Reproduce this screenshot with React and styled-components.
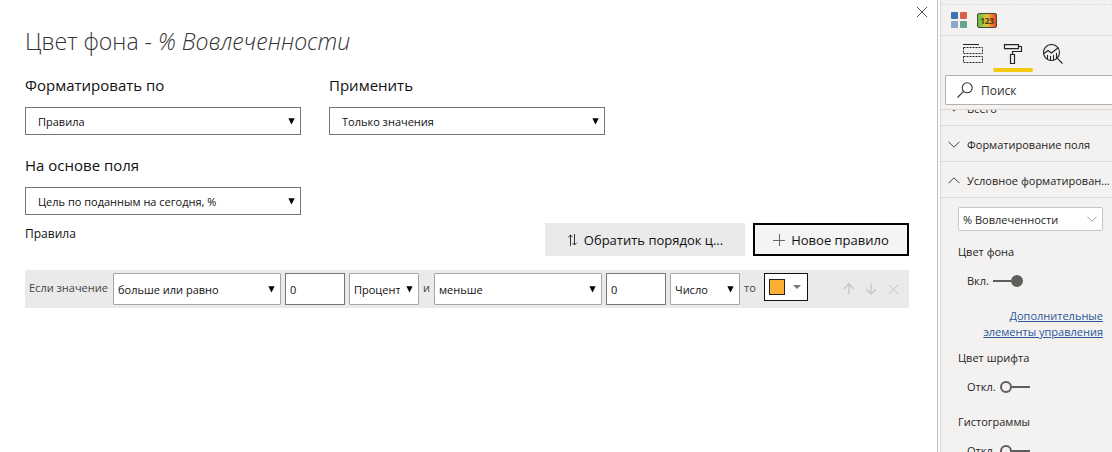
import React from "react";
import styled, { createGlobalStyle } from "styled-components";

const GlobalStyle = createGlobalStyle`
  *, *::before, *::after {
    box-sizing: border-box;
  }
  body {
    margin: 0;
    background: #fff;
    color: #111;
    font-family: "Open Sans", "Noto Sans", sans-serif;
    font-size: 12px;
  }
  button, input, select {
    margin: 0;
    font-family: inherit;
    color: inherit;
  }
`;

const Page = styled.div`
  display: flex;
  height: 100vh;
  overflow: hidden;
`;

const Dialog = styled.main`
  flex: 1;
  min-width: 0;
  padding: 4px 28px 0 25px;
`;

const CloseRow = styled.div`
  display: flex;
  justify-content: flex-end;
  height: 20px;
  margin-right: -21px;
`;

const IconButton = styled.button`
  display: flex;
  align-items: center;
  justify-content: center;
  width: ${(p) => p.$size}px;
  height: ${(p) => p.$size}px;
  padding: 0;
  border: 0;
  background: none;
  color: ${(p) => p.$color};
`;

const Title = styled.h1`
  margin: 0;
  font-size: 23px;
  font-weight: 300;
  line-height: 34px;
  color: #333;
`;

const Fields = styled.div`
  display: grid;
  grid-template-columns: 276px 276px;
  column-gap: 28px;
  row-gap: 19px;
  padding-top: 16px;
`;

const FieldLabel = styled.label`
  display: block;
  margin-bottom: 11px;
  font-size: 15px;
  line-height: 22px;
`;

const SelectBox = styled.div`
  display: grid;
  width: ${(p) => (p.$width ? p.$width + "px" : "100%")};
  height: ${(p) => p.$height}px;
  align-items: center;
  & > * {
    grid-area: 1 / 1;
  }
  & > svg {
    justify-self: end;
    margin-right: 6px;
    pointer-events: none;
  }
`;

const SelectControl = styled.select`
  appearance: none;
  width: 100%;
  height: 100%;
  padding: ${(p) => (p.$compact ? "0 18px 0 4px" : "0 20px 0 12px")};
  border: 1px solid ${(p) => (p.$compact ? "#a6a6a6" : "#767676")};
  border-radius: ${(p) => (p.$compact ? 1 : 0)}px;
  background: #fff;
  font-size: 11px;
`;

const RulesHeader = styled.div`
  display: flex;
  align-items: flex-start;
  gap: 8px;
  padding-top: 8px;
`;

const RulesTitle = styled.h2`
  flex: 1;
  margin: 0;
  font-size: 12px;
  font-weight: 400;
  line-height: 22px;
`;

const ActionButton = styled.button`
  display: flex;
  align-items: center;
  justify-content: center;
  gap: 6px;
  width: ${(p) => p.$width}px;
  height: 33px;
  padding: 0;
  border: ${(p) => (p.$focused ? "2px solid #000" : "0")};
  background: ${(p) => (p.$focused ? "#f4f4f4" : "#eaeaea")};
  font-size: 13px;
`;

const Rule = styled.div`
  display: flex;
  align-items: center;
  gap: 4px;
  height: 38px;
  margin-top: 14px;
  padding: 0 6px 0 4px;
  background: #eaeaea;
`;

const RuleText = styled.span`
  width: ${(p) => p.$width}px;
  padding-bottom: 2px;
  font-size: 11px;
  line-height: 16px;
  white-space: nowrap;
  color: #444;
`;

const ValueInput = styled.input`
  width: 60px;
  height: 32px;
  padding: 0 4px;
  border: 1px solid #767676;
  background: #fff;
  font-size: 11px;
`;

const ColorButton = styled.button`
  display: flex;
  align-items: center;
  align-self: flex-start;
  gap: 8px;
  width: 44px;
  height: 28px;
  margin: 3px 0 0 4px;
  padding: 0 4px;
  border: 1px solid #111;
  background: #fff;
`;

const Swatch = styled.span`
  width: 16px;
  height: 16px;
  border: 1px solid #222;
  background: #fbb034;
`;

const RuleActions = styled.div`
  display: flex;
  gap: 2px;
  margin-left: auto;
`;

const Sidebar = styled.aside`
  display: flex;
  flex-direction: column;
  width: 175px;
  border-left: 1px solid #bdbdbd;
  padding-left: 2px;
  background: #fff;
  color: #252423;
`;

const Pane = styled.div`
  flex: 1;
  min-height: 0;
  overflow: hidden;
  border-left: 1px solid #d8d6d4;
  background: #f3f2f1;
  font-size: 11px;
`;

const Visuals = styled.div`
  display: flex;
  align-items: center;
  gap: 10px;
  height: 32px;
  margin-top: 4px;
  padding-left: 10px;
  border-top: 1px dashed #e1dfdd;
  border-bottom: 1px solid #dcdad8;
`;

const Tabs = styled.div`
  display: flex;
  height: 36px;
  padding-left: 12px;
`;

const Tab = styled.button`
  display: flex;
  flex-direction: column;
  align-items: center;
  justify-content: space-between;
  width: 40px;
  padding: 8px 0 0;
  border: 0;
  background: none;
  color: #252423;
  &::after {
    content: "";
    width: 100%;
    height: 4px;
    border-radius: 2px;
    background: ${(p) => (p.$active ? "#f2c811" : "transparent")};
  }
`;

const Search = styled.label`
  display: flex;
  align-items: center;
  gap: 8px;
  height: 30px;
  margin: 3px 0 4px 4px;
  padding-left: 11px;
  border: 1px solid #b3b0ad;
  border-right: 0;
  border-radius: 2px 0 0 2px;
  background: #fff;
`;

const SearchInput = styled.input`
  flex: 1;
  min-width: 0;
  padding: 0;
  border: 0;
  outline: 0;
  background: none;
  font-size: 12px;
  &::placeholder {
    color: #333;
    opacity: 1;
  }
`;

const ScrolledEdge = styled.div`
  display: flex;
  flex-direction: column;
  justify-content: flex-end;
  height: 17px;
  overflow: hidden;
  border-top: 1px solid #dcdad8;
`;

const SectionButton = styled.button`
  display: flex;
  align-items: center;
  flex-shrink: 0;
  gap: 7px;
  width: 100%;
  height: 36px;
  padding: 1px 0 0 7px;
  border: 0;
  border-bottom: 1px solid #dcdad8;
  background: none;
  font-size: 11px;
  text-align: left;
  & > svg {
    flex-shrink: 0;
  }
`;

const Ellipsis = styled.span`
  overflow: hidden;
  text-overflow: ellipsis;
  white-space: nowrap;
`;

const Settings = styled.div`
  display: flex;
  flex-direction: column;
  padding: 9px 9px 0 17px;
`;

const PaneSelect = styled(SelectControl)`
  padding: 0 20px 0 4px;
  border: 1px solid #c8c6c4;
  border-radius: 2px;
`;

const SettingName = styled.h3`
  margin: ${(p) => p.$top}px 0 10px;
  font-size: 11px;
  font-weight: 400;
  line-height: 20px;
`;

const ToggleLabel = styled.label`
  display: flex;
  align-items: center;
  gap: 4px;
  padding-left: 9px;
  line-height: 18px;
`;

const ToggleInput = styled.input`
  appearance: none;
  display: flex;
  align-items: center;
  width: 30px;
  height: 12px;
  &::before {
    content: "";
    width: 12px;
    height: 12px;
    border: 2px solid #605e5c;
    border-radius: 50%;
  }
  &::after {
    content: "";
    flex: 1;
    height: 2px;
    background: #605e5c;
  }
  &:checked {
    flex-direction: row-reverse;
  }
  &:checked::before {
    background: #605e5c;
  }
`;

const MoreLink = styled.a`
  align-self: flex-end;
  margin-top: 18px;
  line-height: 16px;
  text-align: right;
  color: #2b579a;
`;

const Cross = ({ size }) => (
  <svg width={size} height={size} viewBox="0 0 12 12" fill="none" stroke="currentColor">
    <path d="M1 1l10 10M11 1L1 11" />
  </svg>
);

const Triangle = () => (
  <svg width="7" height="7" viewBox="0 0 7 7">
    <path d="M0.4 0.3h6.2L3.5 6.6z" fill="#000" />
  </svg>
);

const MoveArrow = ({ down }) => (
  <svg width="12" height="12" viewBox="0 0 12 12" fill="none" stroke="currentColor" strokeWidth="1.3">
    <path d={down ? "M6 0.5v10.5M1 6l5 5 5-5" : "M6 11.5V1M1 6l5-5 5 5"} />
  </svg>
);

const Chevron = ({ up, size = 12, color = "#444" }) => (
  <svg width={size} height={size / 2 + 1} viewBox="0 0 12 7" fill="none" stroke={color}>
    <path d={up ? "M0.5 6.3L6 0.8l5.5 5.5" : "M0.5 0.7L6 6.2l5.5-5.5"} />
  </svg>
);

const SwapIcon = () => (
  <svg width="11" height="12" viewBox="0 0 11 12" fill="none" stroke="#333">
    <path d="M3.5 12V1M1.3 3.2L3.5 1l2 2M7.5 0v11M5.5 9l2 2 2.2-2.2" />
  </svg>
);

const PlusIcon = () => (
  <svg width="12" height="12" viewBox="0 0 12 12" stroke="#666">
    <path d="M6.5 0v12M0 6.5h12" />
  </svg>
);

const TilesIcon = () => (
  <svg width="16" height="16" viewBox="0 0 16 16">
    <rect width="7" height="7" rx="1" fill="#3b73af" />
    <rect x="9" width="7" height="7" rx="1" fill="#d65f47" />
    <rect y="9" width="7" height="7" rx="1" fill="#8ba7cc" />
    <rect x="9" y="9" width="7" height="7" rx="1" fill="#66a38c" />
  </svg>
);

const HeatIcon = () => (
  <svg width="20" height="15" viewBox="0 0 20 15">
    <defs>
      <linearGradient id="heat">
        <stop offset="0" stopColor="#4fbf45" />
        <stop offset="0.5" stopColor="#e8c33a" />
        <stop offset="1" stopColor="#e8402a" />
      </linearGradient>
    </defs>
    <rect x="0.5" y="0.5" width="19" height="14" rx="1.5" fill="url(#heat)" stroke="#4a4a3a" />
    <text x="10" y="10.5" textAnchor="middle" fontSize="8" fontWeight="700" fill="#4a3a1a">
      123
    </text>
  </svg>
);

const FieldsIcon = () => (
  <svg width="20" height="20" viewBox="0 0 20 20" fill="none" stroke="currentColor">
    <path d="M0 0.5h16" />
    <path d="M0.5 3.5h19v6h-19zM0.5 12.5h19v6h-19z" strokeDasharray="2 1" />
  </svg>
);

const RollerIcon = () => (
  <svg width="20" height="20" viewBox="0 0 20 20" fill="none" stroke="currentColor" strokeWidth="1.2">
    <path d="M1.5 0.6h14v4h-14zM15.5 2.5h3v5h-9v3M7.5 10.5h4v9h-4z" />
  </svg>
);

const AnalyticsIcon = () => (
  <svg width="20" height="20" viewBox="0 0 20 20" fill="none" stroke="currentColor" strokeWidth="1.1">
    <circle cx="8.5" cy="8.5" r="8" />
    <path d="M14.2 14.2l5.3 5.3M1 9.5l4-3 3.5 2.5 7-5.5M4.5 11v4M7.5 12v4.5M10.5 11v5M13.5 9v5.5" />
  </svg>
);

const SearchIcon = () => (
  <svg width="16" height="16" viewBox="0 0 16 16" fill="none" stroke="#333" strokeWidth="1.1">
    <circle cx="10.2" cy="5.8" r="5" />
    <path d="M6.6 9.4L0.5 15.5" />
  </svg>
);

const Select = ({ value, compact, width, ...rest }) => (
  <SelectBox $width={width} $height={compact ? 32 : 28}>
    <SelectControl $compact={compact} {...rest}>
      <option>{value}</option>
    </SelectControl>
    <Triangle />
  </SelectBox>
);

const Field = ({ id, label, value }) => (
  <div>
    <FieldLabel htmlFor={id}>{label}</FieldLabel>
    <Select id={id} value={value} />
  </div>
);

const Section = ({ title, open }) => (
  <SectionButton type="button" aria-expanded={!!open}>
    <Chevron up={open} />
    <Ellipsis>{title}</Ellipsis>
  </SectionButton>
);

const Toggle = ({ name, on, top }) => (
  <>
    <SettingName $top={top}>{name}</SettingName>
    <ToggleLabel>
      {on ? "Вкл." : "Откл."}
      <ToggleInput type="checkbox" aria-label={name} defaultChecked={on} />
    </ToggleLabel>
  </>
);

const App = () => (
  <>
    <GlobalStyle />
    <Page>
      <Dialog>
        <CloseRow>
          <IconButton type="button" aria-label="Закрыть" $size={16} $color="#555">
            <Cross size={12} />
          </IconButton>
        </CloseRow>
        <Title>
          Цвет фона - <em>% Вовлеченности</em>
        </Title>
        <Fields>
          <Field id="format" label="Форматировать по" value="Правила" />
          <Field id="apply" label="Применить" value="Только значения" />
          <Field id="based" label="На основе поля" value="Цель по поданным на сегодня, %" />
        </Fields>
        <RulesHeader>
          <RulesTitle>Правила</RulesTitle>
          <ActionButton type="button" $width={200}>
            <SwapIcon />
            Обратить порядок ц...
          </ActionButton>
          <ActionButton type="button" $width={156} $focused>
            <PlusIcon />
            Новое правило
          </ActionButton>
        </RulesHeader>
        <Rule>
          <RuleText $width={80}>Если значение</RuleText>
          <Select compact width={168} value="больше или равно" aria-label="Условие от" />
          <ValueInput defaultValue="0" aria-label="Значение от" />
          <Select compact width={70} value="Процент" aria-label="Единица от" />
          <RuleText $width={7}>и</RuleText>
          <Select compact width={168} value="меньше" aria-label="Условие до" />
          <ValueInput defaultValue="0" aria-label="Значение до" />
          <Select compact width={70} value="Число" aria-label="Единица до" />
          <RuleText $width={12}>то</RuleText>
          <ColorButton type="button" aria-label="Цвет">
            <Swatch />
            <svg width="8" height="4" viewBox="0 0 8 4">
              <path d="M0 0h8L4 4z" fill="#777" />
            </svg>
          </ColorButton>
          <RuleActions>
            <IconButton type="button" aria-label="Вверх" $size={20} $color="#c4c4c4">
              <MoveArrow />
            </IconButton>
            <IconButton type="button" aria-label="Вниз" $size={20} $color="#c4c4c4">
              <MoveArrow down />
            </IconButton>
            <IconButton type="button" aria-label="Удалить" $size={20} $color="#c4c4c4">
              <Cross size={11} />
            </IconButton>
          </RuleActions>
        </Rule>
      </Dialog>
      <Sidebar>
        <Pane>
          <Visuals>
            <TilesIcon />
            <HeatIcon />
          </Visuals>
          <Tabs>
            <Tab type="button" aria-label="Поля">
              <FieldsIcon />
            </Tab>
            <Tab type="button" aria-label="Формат" $active>
              <RollerIcon />
            </Tab>
            <Tab type="button" aria-label="Аналитика">
              <AnalyticsIcon />
            </Tab>
          </Tabs>
          <Search>
            <SearchIcon />
            <SearchInput placeholder="Поиск" aria-label="Поиск" />
          </Search>
          <ScrolledEdge>
            <Section title="Всего" />
          </ScrolledEdge>
          <Section title="Форматирование поля" />
          <Section title="Условное форматирование" open />
          <Settings>
            <SelectBox $height={24}>
              <PaneSelect aria-label="Поле">
                <option>% Вовлеченности</option>
              </PaneSelect>
              <Chevron size={10} color="#8a8886" />
            </SelectBox>
            <Toggle name="Цвет фона" on top={11} />
            <MoreLink href="#more">
              Дополнительные
              <br />
              элементы управления
            </MoreLink>
            <Toggle name="Цвет шрифта" top={8} />
            <Toggle name="Гистограммы" top={16} />
          </Settings>
        </Pane>
      </Sidebar>
    </Page>
  </>
);

export default App;
